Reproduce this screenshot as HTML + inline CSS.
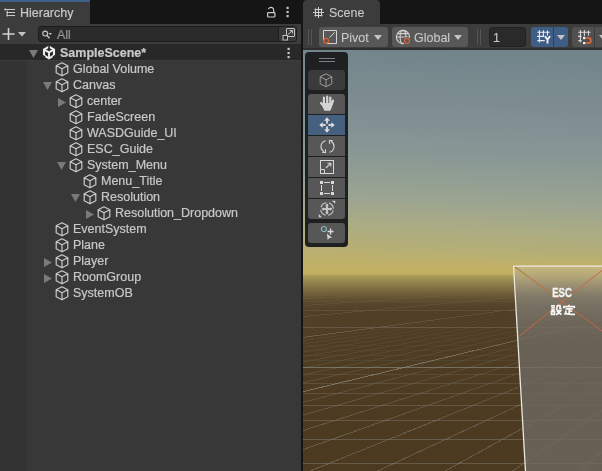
<!DOCTYPE html>
<html><head><meta charset="utf-8">
<style>
*{margin:0;padding:0;box-sizing:border-box}
html,body{width:602px;height:471px;overflow:hidden;background:#151515;font-family:"Liberation Sans",sans-serif;font-size:12.5px;color:#c8c8c8}
svg{display:block}
.a{position:absolute}
#hier{position:absolute;left:0;top:0;width:301px;height:471px;background:#383838;overflow:hidden}
#htabbar{position:absolute;left:0;top:0;width:301px;height:24px;background:#151515}
#htab{position:absolute;left:0;top:0;width:90px;height:24px;background:#3c3c3c;border-top:2px solid #3d6089}
#htoolbar{position:absolute;left:0;top:24px;width:301px;height:20px;background:#3c3c3c}
#search{position:absolute;left:38px;top:26px;width:259px;height:16px;background:#2a2a2a;border:1px solid #1c1c1c;border-radius:3px;overflow:hidden}
#sbtn{position:absolute;right:0;top:0;width:18px;height:14px;background:#393939;border-left:1px solid #1c1c1c}
#scenerow{position:absolute;left:0;top:44px;width:301px;height:16px;background:#282828}
#leftstrip{position:absolute;left:0;top:60px;width:27px;height:411px;background:#333333}
.row{position:absolute;left:0;width:301px;height:16px}
.ic{position:absolute;top:2px}
.arr{position:absolute}
.txt{position:absolute;top:0;line-height:16px;white-space:nowrap;padding-top:1px}
#scene{position:absolute;left:303px;top:0;width:299px;height:471px;overflow:hidden}
#stab{position:absolute;left:0;top:0;width:77px;height:24px;background:#3c3c3c;border-radius:4px 4px 0 0}
#stoolbar{position:absolute;left:0;top:24px;width:299px;height:24px;background:#3c3c3c}
#stbline{position:absolute;left:0;top:48px;width:299px;height:2px;background:#2e2e2e}
#sview{position:absolute;left:0;top:50px;width:299px;height:421px;background:linear-gradient(#72858b 0%,#889892 35%,#b1ab76 52%,#b9a658 54%,#4a3a20 57%,#4e3d22 100%)}
.btn{position:absolute;top:27px;height:20px;background:#585858;border-radius:3px}
#hier,#scene{will-change:transform}
#hier .txt,#hier .a{-webkit-text-stroke:0.2px #c8c8c8}
#scene div.a{-webkit-text-stroke:0.1px #c8c8c8}
</style></head><body>
<div id="hier">
  <div id="htabbar"></div>
  <div id="htab"></div>
  <svg class="a" style="left:3px;top:8px" width="13" height="10" viewBox="0 0 13 10"><path d="M3 1.5H12 M5.3 4.5H12 M5.3 7.5H12" stroke="#cccccc" stroke-width="1"/><path d="M4.3 2.5V7.5" stroke="#bdbdbd" stroke-width="0.8"/><circle cx="2.2" cy="1.5" r="1" fill="#cccccc"/><circle cx="4.3" cy="4.5" r="1" fill="#cccccc"/><circle cx="4.3" cy="7.5" r="1" fill="#cccccc"/></svg>
  <div class="a" style="left:20px;top:5px;line-height:16px;white-space:nowrap">Hierarchy</div>
  <svg class="a" style="left:266px;top:6px" width="11" height="12" viewBox="0 0 11 12"><path d="M2.3 2.8C3.5 1.4 5 1.2 6.2 1.6C7.3 2 7.7 3 7.7 4.2V6.5" fill="none" stroke="#cccccc" stroke-width="1.2"/><rect x="1.6" y="6.6" width="7.3" height="4.4" rx="0.8" fill="none" stroke="#cccccc" stroke-width="1.2"/></svg>
  <svg class="a" style="left:286px;top:6px" width="4" height="12"><rect x="0.5" y="0.8" width="2.2" height="2.2" fill="#c4c4c4"/><rect x="0.5" y="4.9" width="2.2" height="2.2" fill="#c4c4c4"/><rect x="0.5" y="9" width="2.2" height="2.2" fill="#c4c4c4"/></svg>
  <div id="htoolbar"></div>
  <svg class="a" style="left:2px;top:28px" width="13" height="13"><path d="M6.5 0V12 M0.5 6H12.5" stroke="#d2d2d2" stroke-width="1.6"/></svg>
  <svg class="a" style="left:18px;top:32px" width="9" height="5"><path d="M0 0H8L4 4.5Z" fill="#c4c4c4"/></svg>
  <div id="search"><div id="sbtn"></div></div>
  <svg class="a" style="left:42px;top:29px" width="12" height="11" viewBox="0 0 12 11"><circle cx="3.2" cy="4.6" r="2.4" fill="none" stroke="#c4c4c4" stroke-width="1.2"/><path d="M4.9 6.4L7.6 9.3" stroke="#c4c4c4" stroke-width="1.4"/><path d="M6.5 4H10L8.25 6Z" fill="#c4c4c4"/></svg>
  <div class="a" style="left:57px;top:27px;line-height:16px;color:#7a7a7a">All</div>
  <svg class="a" style="left:282px;top:28px" width="14" height="13" viewBox="0 0 14 13"><rect x="4.5" y="0.5" width="8" height="8" rx="0.5" fill="none" stroke="#c4c4c4" stroke-width="1"/><rect x="1" y="7.5" width="4.5" height="4.5" fill="#2a2a2a" stroke="#c4c4c4" stroke-width="1"/><path d="M6 6.5L10.5 2.5 M7.5 2.5H10.5V5.5" fill="none" stroke="#c4c4c4" stroke-width="1"/></svg>
  <div id="scenerow"></div>
  <svg class="a" style="left:29px;top:50px" width="10" height="9"><path d="M0 0H9L4.5 8Z" fill="#7a7a7a"/></svg>
  <svg class="a" style="left:42px;top:45px" width="14" height="15" viewBox="0 0 14 15"><path d="M7 1.6L12 4.5V10.5L7 13.4L2 10.5V4.5Z" fill="none" stroke="#ececec" stroke-width="2.1" stroke-linejoin="miter"/><path d="M7 7.4V13.4 M7 7.4L2.6 4.9 M7 7.4L11.4 4.9" stroke="#ececec" stroke-width="1.9"/><path d="M7 0V4.4" stroke="#282828" stroke-width="1.6"/><path d="M0 10L3.2 12 M14 10L10.8 12" stroke="#282828" stroke-width="1.4"/></svg>
  <div class="a" style="left:60px;top:44px;line-height:16px;font-weight:bold;white-space:nowrap;padding-top:1px">SampleScene*</div>
  <svg class="a" style="left:287px;top:47px" width="4" height="12"><rect x="0.5" y="0.8" width="2.2" height="2.2" fill="#c4c4c4"/><rect x="0.5" y="4.9" width="2.2" height="2.2" fill="#c4c4c4"/><rect x="0.5" y="9" width="2.2" height="2.2" fill="#c4c4c4"/></svg>
  <div id="leftstrip"></div>
  <div class="a" style="left:0;top:60px;width:301px;height:1px;background:#3d3d3d"></div>
<div class="row" style="top:60px"><div class="ic" style="left:55px"><svg class="cube" width="14" height="15" viewBox="0 0 14 15"><path d="M7 0.8L12.8 3.8V10.8L7 13.8L1.2 10.8V3.8Z M1.2 3.8L7 6.8L12.8 3.8 M7 6.8V13.8" fill="none" stroke="#cccccc" stroke-width="1.2" stroke-linejoin="round"/></svg></div><div class="txt" style="left:73px">Global Volume</div></div>
<div class="row" style="top:76px"><svg class="arr" style="left:43px;top:6px" width="10" height="9"><path d="M0 0H9L4.5 8Z" fill="#7a7a7a"/></svg><div class="ic" style="left:55px"><svg class="cube" width="14" height="15" viewBox="0 0 14 15"><path d="M7 0.8L12.8 3.8V10.8L7 13.8L1.2 10.8V3.8Z M1.2 3.8L7 6.8L12.8 3.8 M7 6.8V13.8" fill="none" stroke="#cccccc" stroke-width="1.2" stroke-linejoin="round"/></svg></div><div class="txt" style="left:73px">Canvas</div></div>
<div class="row" style="top:92px"><svg class="arr" style="left:58px;top:6px" width="9" height="10"><path d="M0 0L8 4.5L0 9Z" fill="#7a7a7a"/></svg><div class="ic" style="left:69px"><svg class="cube" width="14" height="15" viewBox="0 0 14 15"><path d="M7 0.8L12.8 3.8V10.8L7 13.8L1.2 10.8V3.8Z M1.2 3.8L7 6.8L12.8 3.8 M7 6.8V13.8" fill="none" stroke="#cccccc" stroke-width="1.2" stroke-linejoin="round"/></svg></div><div class="txt" style="left:87px">center</div></div>
<div class="row" style="top:108px"><div class="ic" style="left:69px"><svg class="cube" width="14" height="15" viewBox="0 0 14 15"><path d="M7 0.8L12.8 3.8V10.8L7 13.8L1.2 10.8V3.8Z M1.2 3.8L7 6.8L12.8 3.8 M7 6.8V13.8" fill="none" stroke="#cccccc" stroke-width="1.2" stroke-linejoin="round"/></svg></div><div class="txt" style="left:87px">FadeScreen</div></div>
<div class="row" style="top:124px"><div class="ic" style="left:69px"><svg class="cube" width="14" height="15" viewBox="0 0 14 15"><path d="M7 0.8L12.8 3.8V10.8L7 13.8L1.2 10.8V3.8Z M1.2 3.8L7 6.8L12.8 3.8 M7 6.8V13.8" fill="none" stroke="#cccccc" stroke-width="1.2" stroke-linejoin="round"/></svg></div><div class="txt" style="left:87px">WASDGuide_UI</div></div>
<div class="row" style="top:140px"><div class="ic" style="left:69px"><svg class="cube" width="14" height="15" viewBox="0 0 14 15"><path d="M7 0.8L12.8 3.8V10.8L7 13.8L1.2 10.8V3.8Z M1.2 3.8L7 6.8L12.8 3.8 M7 6.8V13.8" fill="none" stroke="#cccccc" stroke-width="1.2" stroke-linejoin="round"/></svg></div><div class="txt" style="left:87px">ESC_Guide</div></div>
<div class="row" style="top:156px"><svg class="arr" style="left:57px;top:6px" width="10" height="9"><path d="M0 0H9L4.5 8Z" fill="#7a7a7a"/></svg><div class="ic" style="left:69px"><svg class="cube" width="14" height="15" viewBox="0 0 14 15"><path d="M7 0.8L12.8 3.8V10.8L7 13.8L1.2 10.8V3.8Z M1.2 3.8L7 6.8L12.8 3.8 M7 6.8V13.8" fill="none" stroke="#cccccc" stroke-width="1.2" stroke-linejoin="round"/></svg></div><div class="txt" style="left:87px">System_Menu</div></div>
<div class="row" style="top:172px"><div class="ic" style="left:83px"><svg class="cube" width="14" height="15" viewBox="0 0 14 15"><path d="M7 0.8L12.8 3.8V10.8L7 13.8L1.2 10.8V3.8Z M1.2 3.8L7 6.8L12.8 3.8 M7 6.8V13.8" fill="none" stroke="#cccccc" stroke-width="1.2" stroke-linejoin="round"/></svg></div><div class="txt" style="left:101px">Menu_Title</div></div>
<div class="row" style="top:188px"><svg class="arr" style="left:71px;top:6px" width="10" height="9"><path d="M0 0H9L4.5 8Z" fill="#7a7a7a"/></svg><div class="ic" style="left:83px"><svg class="cube" width="14" height="15" viewBox="0 0 14 15"><path d="M7 0.8L12.8 3.8V10.8L7 13.8L1.2 10.8V3.8Z M1.2 3.8L7 6.8L12.8 3.8 M7 6.8V13.8" fill="none" stroke="#cccccc" stroke-width="1.2" stroke-linejoin="round"/></svg></div><div class="txt" style="left:101px">Resolution</div></div>
<div class="row" style="top:204px"><svg class="arr" style="left:86px;top:6px" width="9" height="10"><path d="M0 0L8 4.5L0 9Z" fill="#7a7a7a"/></svg><div class="ic" style="left:97px"><svg class="cube" width="14" height="15" viewBox="0 0 14 15"><path d="M7 0.8L12.8 3.8V10.8L7 13.8L1.2 10.8V3.8Z M1.2 3.8L7 6.8L12.8 3.8 M7 6.8V13.8" fill="none" stroke="#cccccc" stroke-width="1.2" stroke-linejoin="round"/></svg></div><div class="txt" style="left:115px">Resolution_Dropdown</div></div>
<div class="row" style="top:220px"><div class="ic" style="left:55px"><svg class="cube" width="14" height="15" viewBox="0 0 14 15"><path d="M7 0.8L12.8 3.8V10.8L7 13.8L1.2 10.8V3.8Z M1.2 3.8L7 6.8L12.8 3.8 M7 6.8V13.8" fill="none" stroke="#cccccc" stroke-width="1.2" stroke-linejoin="round"/></svg></div><div class="txt" style="left:73px">EventSystem</div></div>
<div class="row" style="top:236px"><div class="ic" style="left:55px"><svg class="cube" width="14" height="15" viewBox="0 0 14 15"><path d="M7 0.8L12.8 3.8V10.8L7 13.8L1.2 10.8V3.8Z M1.2 3.8L7 6.8L12.8 3.8 M7 6.8V13.8" fill="none" stroke="#cccccc" stroke-width="1.2" stroke-linejoin="round"/></svg></div><div class="txt" style="left:73px">Plane</div></div>
<div class="row" style="top:252px"><svg class="arr" style="left:44px;top:6px" width="9" height="10"><path d="M0 0L8 4.5L0 9Z" fill="#7a7a7a"/></svg><div class="ic" style="left:55px"><svg class="cube" width="14" height="15" viewBox="0 0 14 15"><path d="M7 0.8L12.8 3.8V10.8L7 13.8L1.2 10.8V3.8Z M1.2 3.8L7 6.8L12.8 3.8 M7 6.8V13.8" fill="none" stroke="#cccccc" stroke-width="1.2" stroke-linejoin="round"/></svg></div><div class="txt" style="left:73px">Player</div></div>
<div class="row" style="top:268px"><svg class="arr" style="left:44px;top:6px" width="9" height="10"><path d="M0 0L8 4.5L0 9Z" fill="#7a7a7a"/></svg><div class="ic" style="left:55px"><svg class="cube" width="14" height="15" viewBox="0 0 14 15"><path d="M7 0.8L12.8 3.8V10.8L7 13.8L1.2 10.8V3.8Z M1.2 3.8L7 6.8L12.8 3.8 M7 6.8V13.8" fill="none" stroke="#cccccc" stroke-width="1.2" stroke-linejoin="round"/></svg></div><div class="txt" style="left:73px">RoomGroup</div></div>
<div class="row" style="top:284px"><div class="ic" style="left:55px"><svg class="cube" width="14" height="15" viewBox="0 0 14 15"><path d="M7 0.8L12.8 3.8V10.8L7 13.8L1.2 10.8V3.8Z M1.2 3.8L7 6.8L12.8 3.8 M7 6.8V13.8" fill="none" stroke="#cccccc" stroke-width="1.2" stroke-linejoin="round"/></svg></div><div class="txt" style="left:73px">SystemOB</div></div>
</div>
<div id="scene">
  <div id="stab"></div>
  <svg class="a" style="left:10px;top:7px" width="11" height="11" viewBox="0 0 11 11"><path d="M2.5 1.5V9.5 M5.5 0V11 M8.5 1.5V9.5 M1.5 2.5H9.5 M0 5.5H11 M1.5 8.5H9.5" stroke="#d0d0d0" stroke-width="1"/></svg>
  <div class="a" style="left:26px;top:5px;line-height:16px;white-space:nowrap">Scene</div>
  <div id="stoolbar"></div>
  <div id="stbline"></div>
  <div class="a" style="left:5px;top:29px;width:1px;height:16px;background:#575757"></div>
  <div class="a" style="left:8px;top:29px;width:1px;height:16px;background:#575757"></div>
  <div class="btn" style="left:16px;width:69px"></div>
  <svg class="a" style="left:20px;top:30px" width="15" height="15" viewBox="0 0 15 15"><path d="M0.5 11V0.5H13.5V13.5H3.5" fill="none" stroke="#d4d4d4" stroke-width="1"/><path d="M11.8 2.3L6.5 7.5" stroke="#d4d4d4" stroke-width="1"/><circle cx="3.2" cy="10.8" r="2.4" fill="none" stroke="#d8612c" stroke-width="1.3"/></svg>
  <div class="a" style="left:38px;top:30px;line-height:16px;white-space:nowrap">Pivot</div>
  <svg class="a" style="left:71px;top:35px" width="9" height="6"><path d="M0 0H8L4 5Z" fill="#c4c4c4"/></svg>
  <div class="btn" style="left:89px;width:76px"></div>
  <svg class="a" style="left:92px;top:29px" width="17" height="17" viewBox="0 0 17 17"><circle cx="8" cy="8" r="6.6" fill="none" stroke="#d4d4d4" stroke-width="1.1"/><ellipse cx="8" cy="8" rx="2.9" ry="6.6" fill="none" stroke="#d4d4d4" stroke-width="1.1"/><path d="M1.4 8H14.6 M2.6 4.6H13.4" stroke="#d4d4d4" stroke-width="1.1"/><circle cx="12" cy="11.8" r="3.9" fill="#585858"/><circle cx="12" cy="11.8" r="2.5" fill="none" stroke="#d2643a" stroke-width="1.3"/></svg>
  <div class="a" style="left:111px;top:30px;line-height:16px;white-space:nowrap">Global</div>
  <svg class="a" style="left:151px;top:35px" width="9" height="6"><path d="M0 0H8L4 5Z" fill="#c4c4c4"/></svg>
  <div class="a" style="left:174px;top:29px;width:1px;height:16px;background:#575757"></div>
  <div class="a" style="left:177px;top:29px;width:1px;height:16px;background:#575757"></div>
  <div class="a" style="left:186px;top:27px;width:37px;height:20px;background:#2a2a2a;border:1px solid #212121;border-radius:3px"></div>
  <div class="a" style="left:190px;top:30px;line-height:16px">1</div>
  <div class="a" style="left:228px;top:27px;width:22px;height:20px;background:#3f5e85;border-radius:3px 0 0 3px"></div>
  <div class="a" style="left:251px;top:27px;width:14px;height:20px;background:#3f5e85;border-radius:0 3px 3px 0"></div>
  <svg class="a" style="left:230px;top:27px" width="22" height="20" viewBox="0 0 22 20"><path d="M6.4 3.2V15.5 M10.4 3.2V9.4 M14.5 3.6V8.5 M4.3 5.3H16.6 M4 9.4H11 M4.3 13.6H11.7" stroke="#ececec" stroke-width="1.1"/><path d="M11.9 9.1L14.5 12.6L17.1 9.1 M14.5 12.6V16.6" fill="none" stroke="#f2f2f2" stroke-width="1.8"/></svg>
  <svg class="a" style="left:254px;top:35px" width="9" height="6"><path d="M0 0H8L4 5Z" fill="#c4c4c4"/></svg>
  <div class="a" style="left:269px;top:27px;width:22px;height:20px;background:#505050;border-radius:3px 0 0 3px"></div>
  <div class="a" style="left:292px;top:27px;width:14px;height:20px;background:#505050;border-radius:0 3px 3px 0"></div>
  <svg class="a" style="left:271px;top:27px" width="22" height="20" viewBox="0 0 22 20"><path d="M6.4 3V15.5 M10.4 3V9.2 M14.5 3.6V8.5 M4.3 5.3H16.6 M4 9.4H7.7 M4.3 13.6H7.7" stroke="#d8d8d8" stroke-width="1.1"/><rect x="9" y="10" width="2.4" height="2.2" fill="#f4f4f4"/><rect x="9" y="15" width="2.4" height="2.1" fill="#f4f4f4"/><path d="M12.3 11H14.4A2.5 2.5 0 0 1 14.4 16H12.3" fill="none" stroke="#d2643a" stroke-width="2"/></svg>
  <svg class="a" style="left:296px;top:35px" width="9" height="6"><path d="M0 0H8L4 5Z" fill="#c4c4c4"/></svg>
  <svg class="a" style="left:0;top:50px" width="299" height="421" viewBox="0 0 299 421"><g transform="translate(-303,-50)" clip-path="url(#cl)"><defs><linearGradient id="sky" gradientUnits="userSpaceOnUse" x1="385" y1="50" x2="368.6" y2="471"><stop offset="0.0000" stop-color="#72858b"/><stop offset="0.0594" stop-color="#788a8e"/><stop offset="0.1188" stop-color="#7d8c90"/><stop offset="0.1781" stop-color="#829294"/><stop offset="0.2375" stop-color="#889795"/><stop offset="0.2969" stop-color="#919e93"/><stop offset="0.3563" stop-color="#9ca590"/><stop offset="0.4157" stop-color="#abac84"/><stop offset="0.4632" stop-color="#b4ae77"/><stop offset="0.4941" stop-color="#bcb06d"/><stop offset="0.5178" stop-color="#c2b165"/><stop offset="0.5321" stop-color="#c2b062"/><stop offset="0.5368" stop-color="#aa9a58"/><stop offset="0.5582" stop-color="#8b7b48"/><stop offset="0.5819" stop-color="#6c5a36"/><stop offset="0.5986" stop-color="#58472a"/><stop offset="0.6223" stop-color="#4f3e24"/><stop offset="1.0000" stop-color="#4b3a20"/></linearGradient><linearGradient id="hz" gradientUnits="userSpaceOnUse" x1="0" y1="255" x2="0" y2="471"><stop offset="-0.0463" stop-color="#b4ae77" stop-opacity="0.000"/><stop offset="0.0139" stop-color="#bcb06d" stop-opacity="0.273"/><stop offset="0.0602" stop-color="#c2b165" stop-opacity="1.000"/><stop offset="0.0880" stop-color="#c2b062" stop-opacity="1.000"/><stop offset="0.0972" stop-color="#aa9a58" stop-opacity="1.000"/><stop offset="0.1389" stop-color="#8b7b48" stop-opacity="1.000"/><stop offset="0.1852" stop-color="#6c5a36" stop-opacity="1.000"/><stop offset="0.2176" stop-color="#58472a" stop-opacity="1.000"/><stop offset="0.2639" stop-color="#4f3e24" stop-opacity="1.000"/><stop offset="1.0000" stop-color="#4b3a20" stop-opacity="1.000"/></linearGradient><linearGradient id="gmk" gradientUnits="userSpaceOnUse" x1="0" y1="50" x2="0" y2="471"><stop offset="0.5606" stop-color="#fff" stop-opacity="0"/><stop offset="0.6057" stop-color="#fff" stop-opacity="0.05"/><stop offset="0.6651" stop-color="#fff" stop-opacity="0.2"/><stop offset="0.7838" stop-color="#fff" stop-opacity="0.6"/><stop offset="0.9026" stop-color="#fff" stop-opacity="1.0"/><stop offset="1.0000" stop-color="#fff" stop-opacity="1.0"/></linearGradient><mask id="mk" maskUnits="userSpaceOnUse" x="303" y="50" width="299" height="421"><rect x="303" y="50" width="299" height="421" fill="url(#gmk)"/></mask><linearGradient id="gmj" gradientUnits="userSpaceOnUse" x1="0" y1="50" x2="0" y2="471"><stop offset="0.5653" stop-color="#fff" stop-opacity="0"/><stop offset="0.6057" stop-color="#fff" stop-opacity="0.22"/><stop offset="0.6532" stop-color="#fff" stop-opacity="0.45"/><stop offset="0.7363" stop-color="#fff" stop-opacity="0.85"/><stop offset="0.8314" stop-color="#fff" stop-opacity="1.0"/><stop offset="1.0000" stop-color="#fff" stop-opacity="1.0"/></linearGradient><mask id="mj" maskUnits="userSpaceOnUse" x="303" y="50" width="299" height="421"><rect x="303" y="50" width="299" height="421" fill="url(#gmj)"/></mask><clipPath id="cl"><rect x="303" y="50" width="299" height="421"/></clipPath></defs><rect x="303" y="50" width="299" height="421" fill="url(#sky)"/><rect x="303" y="255" width="299" height="216" fill="url(#hz)"/><g id="mng" mask="url(#mk)" stroke="#8a8a88" stroke-opacity="0.42" stroke-width="1" shape-rendering="crispEdges"><line x1="303" y1="463.5" x2="602" y2="463.5" stroke-opacity="0.420"/><line x1="303" y1="439.5" x2="602" y2="439.5" stroke-opacity="0.420"/><line x1="303" y1="420.5" x2="602" y2="420.5" stroke-opacity="0.420"/><line x1="303" y1="405.5" x2="602" y2="405.5" stroke-opacity="0.420"/><line x1="303" y1="393.5" x2="602" y2="393.5" stroke-opacity="0.420"/><line x1="303" y1="383.5" x2="602" y2="383.5" stroke-opacity="0.401"/><line x1="303" y1="374.5" x2="602" y2="374.5" stroke-opacity="0.350"/><line x1="303" y1="360.5" x2="602" y2="360.5" stroke-opacity="0.272"/><line x1="303" y1="355.5" x2="602" y2="355.5" stroke-opacity="0.241"/><line x1="303" y1="350.5" x2="602" y2="350.5" stroke-opacity="0.215"/><line x1="303" y1="345.5" x2="602" y2="345.5" stroke-opacity="0.192"/><line x1="303" y1="341.5" x2="602" y2="341.5" stroke-opacity="0.173"/><line x1="303" y1="338.5" x2="602" y2="338.5" stroke-opacity="0.155"/><line x1="303" y1="335.5" x2="602" y2="335.5" stroke-opacity="0.140"/><line x1="303" y1="332.5" x2="602" y2="332.5" stroke-opacity="0.126"/><line x1="303" y1="329.5" x2="602" y2="329.5" stroke-opacity="0.114"/><line x1="303" y1="324.5" x2="602" y2="324.5" stroke-opacity="0.093"/><line x1="303" y1="322.5" x2="602" y2="322.5" stroke-opacity="0.084"/><line x1="303" y1="320.5" x2="602" y2="320.5" stroke-opacity="0.076"/><line x1="303" y1="318.5" x2="602" y2="318.5" stroke-opacity="0.069"/><line x1="303" y1="317.5" x2="602" y2="317.5" stroke-opacity="0.063"/><line x1="303" y1="315.5" x2="602" y2="315.5" stroke-opacity="0.057"/><line x1="303" y1="314.5" x2="602" y2="314.5" stroke-opacity="0.051"/><line x1="303" y1="312.5" x2="602" y2="312.5" stroke-opacity="0.046"/><line x1="303" y1="311.5" x2="602" y2="311.5" stroke-opacity="0.041"/><line x1="303" y1="309.5" x2="602" y2="309.5" stroke-opacity="0.033"/><line x1="303" y1="308.5" x2="602" y2="308.5" stroke-opacity="0.030"/><line x1="303" y1="307.5" x2="602" y2="307.5" stroke-opacity="0.026"/><line x1="303" y1="306.5" x2="602" y2="306.5" stroke-opacity="0.023"/><line x1="303" y1="305.5" x2="602" y2="305.5" stroke-opacity="0.021"/><line x1="303" y1="304.5" x2="602" y2="304.5" stroke-opacity="0.018"/><line x1="303" y1="303.5" x2="602" y2="303.5" stroke-opacity="0.016"/><line x1="303" y1="302.5" x2="602" y2="302.5" stroke-opacity="0.013"/><line x1="625.82" y1="276" x2="-5359.90" y2="471"/><line x1="627.84" y1="276" x2="-5292.40" y2="471"/><line x1="629.85" y1="276" x2="-5224.90" y2="471"/><line x1="631.87" y1="276" x2="-5157.40" y2="471"/><line x1="633.88" y1="276" x2="-5089.90" y2="471"/><line x1="635.90" y1="276" x2="-5022.40" y2="471"/><line x1="637.91" y1="276" x2="-4954.90" y2="471"/><line x1="639.93" y1="276" x2="-4887.40" y2="471"/><line x1="641.94" y1="276" x2="-4819.90" y2="471"/><line x1="645.97" y1="276" x2="-4684.90" y2="471"/><line x1="647.99" y1="276" x2="-4617.40" y2="471"/><line x1="650.00" y1="276" x2="-4549.90" y2="471"/><line x1="652.02" y1="276" x2="-4482.40" y2="471"/><line x1="654.03" y1="276" x2="-4414.90" y2="471"/><line x1="656.05" y1="276" x2="-4347.40" y2="471"/><line x1="658.06" y1="276" x2="-4279.90" y2="471"/><line x1="660.08" y1="276" x2="-4212.40" y2="471"/><line x1="662.09" y1="276" x2="-4144.90" y2="471"/><line x1="666.12" y1="276" x2="-4009.90" y2="471"/><line x1="668.14" y1="276" x2="-3942.40" y2="471"/><line x1="670.15" y1="276" x2="-3874.90" y2="471"/><line x1="672.17" y1="276" x2="-3807.40" y2="471"/><line x1="674.18" y1="276" x2="-3739.90" y2="471"/><line x1="676.20" y1="276" x2="-3672.40" y2="471"/><line x1="678.21" y1="276" x2="-3604.90" y2="471"/><line x1="680.23" y1="276" x2="-3537.40" y2="471"/><line x1="682.24" y1="276" x2="-3469.90" y2="471"/><line x1="686.27" y1="276" x2="-3334.90" y2="471"/><line x1="688.29" y1="276" x2="-3267.40" y2="471"/><line x1="690.30" y1="276" x2="-3199.90" y2="471"/><line x1="692.32" y1="276" x2="-3132.40" y2="471"/><line x1="694.33" y1="276" x2="-3064.90" y2="471"/><line x1="696.35" y1="276" x2="-2997.40" y2="471"/><line x1="698.36" y1="276" x2="-2929.90" y2="471"/><line x1="700.38" y1="276" x2="-2862.40" y2="471"/><line x1="702.39" y1="276" x2="-2794.90" y2="471"/><line x1="706.42" y1="276" x2="-2659.90" y2="471"/><line x1="708.44" y1="276" x2="-2592.40" y2="471"/><line x1="710.45" y1="276" x2="-2524.90" y2="471"/><line x1="712.47" y1="276" x2="-2457.40" y2="471"/><line x1="714.48" y1="276" x2="-2389.90" y2="471"/><line x1="716.50" y1="276" x2="-2322.40" y2="471"/><line x1="718.51" y1="276" x2="-2254.90" y2="471"/><line x1="720.53" y1="276" x2="-2187.40" y2="471"/><line x1="722.54" y1="276" x2="-2119.90" y2="471"/><line x1="726.57" y1="276" x2="-1984.90" y2="471"/><line x1="728.59" y1="276" x2="-1917.40" y2="471"/><line x1="730.60" y1="276" x2="-1849.90" y2="471"/><line x1="732.61" y1="276" x2="-1782.40" y2="471"/><line x1="734.63" y1="276" x2="-1714.90" y2="471"/><line x1="736.64" y1="276" x2="-1647.40" y2="471"/><line x1="738.66" y1="276" x2="-1579.90" y2="471"/><line x1="740.67" y1="276" x2="-1512.40" y2="471"/><line x1="742.69" y1="276" x2="-1444.90" y2="471"/><line x1="746.72" y1="276" x2="-1309.90" y2="471"/><line x1="748.73" y1="276" x2="-1242.40" y2="471"/><line x1="750.75" y1="276" x2="-1174.90" y2="471"/><line x1="752.76" y1="276" x2="-1107.40" y2="471"/><line x1="754.78" y1="276" x2="-1039.90" y2="471"/><line x1="756.79" y1="276" x2="-972.40" y2="471"/><line x1="758.81" y1="276" x2="-904.90" y2="471"/><line x1="760.82" y1="276" x2="-837.40" y2="471"/><line x1="762.84" y1="276" x2="-769.90" y2="471"/><line x1="766.87" y1="276" x2="-634.90" y2="471"/><line x1="768.88" y1="276" x2="-567.40" y2="471"/><line x1="770.90" y1="276" x2="-499.90" y2="471"/><line x1="772.91" y1="276" x2="-432.40" y2="471"/><line x1="774.93" y1="276" x2="-364.90" y2="471"/><line x1="776.94" y1="276" x2="-297.40" y2="471"/><line x1="778.96" y1="276" x2="-229.90" y2="471"/><line x1="780.97" y1="276" x2="-162.40" y2="471"/><line x1="782.99" y1="276" x2="-94.90" y2="471"/><line x1="787.02" y1="276" x2="40.10" y2="471"/><line x1="789.03" y1="276" x2="107.60" y2="471"/><line x1="791.05" y1="276" x2="175.10" y2="471"/><line x1="793.06" y1="276" x2="242.60" y2="471"/><line x1="795.08" y1="276" x2="310.10" y2="471"/><line x1="797.09" y1="276" x2="377.60" y2="471"/><line x1="799.11" y1="276" x2="445.10" y2="471"/><line x1="801.12" y1="276" x2="512.60" y2="471"/><line x1="803.14" y1="276" x2="580.10" y2="471"/><line x1="807.17" y1="276" x2="715.10" y2="471"/></g><g id="mjg" mask="url(#mj)" stroke-width="1" shape-rendering="crispEdges"><line x1="303" y1="367.5" x2="602" y2="367.5" stroke="#9c9c98" stroke-opacity="0.6"/><line x1="303" y1="327.5" x2="602" y2="327.5" stroke="#9c9c98" stroke-opacity="0.6"/><line x1="303" y1="310.5" x2="602" y2="310.5" stroke="#9c9c98" stroke-opacity="0.6"/><line x1="303" y1="301.5" x2="602" y2="301.5" stroke="#9c9c98" stroke-opacity="0.6"/><line x1="303" y1="295.5" x2="602" y2="295.5" stroke="#9c9c98" stroke-opacity="0.6"/><line x1="303" y1="291.5" x2="602" y2="291.5" stroke="#9c9c98" stroke-opacity="0.6"/><line x1="303" y1="288.5" x2="602" y2="288.5" stroke="#9c9c98" stroke-opacity="0.6"/><line x1="303" y1="286.5" x2="602" y2="286.5" stroke="#9c9c98" stroke-opacity="0.6"/><line x1="303" y1="284.5" x2="602" y2="284.5" stroke="#9c9c98" stroke-opacity="0.6"/><line x1="303" y1="283.5" x2="602" y2="283.5" stroke="#9c9c98" stroke-opacity="0.6"/><line x1="303" y1="282.5" x2="602" y2="282.5" stroke="#9c9c98" stroke-opacity="0.6"/><line x1="303" y1="281.5" x2="602" y2="281.5" stroke="#9c9c98" stroke-opacity="0.6"/><line x1="303" y1="280.5" x2="602" y2="280.5" stroke="#9c9c98" stroke-opacity="0.6"/><line x1="303" y1="279.5" x2="602" y2="279.5" stroke="#9c9c98" stroke-opacity="0.6"/><line x1="303" y1="279.5" x2="602" y2="279.5" stroke="#9c9c98" stroke-opacity="0.6"/><line x1="303" y1="278.5" x2="602" y2="278.5" stroke="#9c9c98" stroke-opacity="0.6"/><line x1="623.81" y1="276" x2="-5427.40" y2="471" stroke="#9c9c98" stroke-opacity="0.6"/><line x1="643.96" y1="276" x2="-4752.40" y2="471" stroke="#9c9c98" stroke-opacity="0.6"/><line x1="664.11" y1="276" x2="-4077.40" y2="471" stroke="#9c9c98" stroke-opacity="0.6"/><line x1="684.26" y1="276" x2="-3402.40" y2="471" stroke="#9c9c98" stroke-opacity="0.6"/><line x1="704.41" y1="276" x2="-2727.40" y2="471" stroke="#9c9c98" stroke-opacity="0.6"/><line x1="724.56" y1="276" x2="-2052.40" y2="471" stroke="#9c9c98" stroke-opacity="0.6"/><line x1="744.70" y1="276" x2="-1377.40" y2="471" stroke="#9c9c98" stroke-opacity="0.6"/><line x1="764.85" y1="276" x2="-702.40" y2="471" stroke="#9c9c98" stroke-opacity="0.6"/><line x1="785.00" y1="276" x2="-27.40" y2="471" stroke="#9c9c98" stroke-opacity="0.6"/><line x1="805.15" y1="276" x2="647.60" y2="471" stroke="#9c9c98" stroke-opacity="0.6"/></g><defs><linearGradient id="qg" gradientUnits="userSpaceOnUse" x1="0" y1="265" x2="0" y2="471"><stop offset="0" stop-color="#c6b97f"/><stop offset="0.05" stop-color="#b5a878"/><stop offset="0.1" stop-color="#9a8f72"/><stop offset="0.15" stop-color="#837b68"/><stop offset="0.2" stop-color="#767062"/><stop offset="0.28" stop-color="#6d6659"/><stop offset="0.42" stop-color="#686054"/><stop offset="1" stop-color="#676054"/></linearGradient><clipPath id="qc"><path d="M513 265.5L602 265.5L602 471L525 471Z"/></clipPath></defs>
<path d="M513 265.5L602 265.5L602 471L525 471Z" fill="url(#qg)"/>
<g clip-path="url(#qc)" opacity="0.38"><use href="#mng"/><use href="#mjg"/></g>
<path d="M513 265.5L602 331 M519.4 336L602 270.3" stroke="#cc6440" stroke-width="1" stroke-opacity="0.95"/>
<path d="M513 265.5L530 278" stroke="#a09050" stroke-width="1.3" stroke-opacity="0.7"/>
<path d="M513 266H602 M513.5 265.5L525.5 471" stroke="#ece8e0" stroke-width="1.25"/>
<text x="552.2" y="296.7" font-family="Liberation Sans" font-weight="bold" font-size="12.2" fill="#f4f4f4" stroke="#f4f4f4" stroke-width="0.35" textLength="19.6" lengthAdjust="spacingAndGlyphs">ESC</text>
<g stroke="#f4f4f4" stroke-width="1.75" fill="none" transform="translate(0,-0.8)">
<path d="M551 306.6H555 M551.3 308.6H554.8 M551.3 310.6H554.8 M551.5 312.3H554.5V315.2H551.5Z"/>
<path d="M557 306.3V308.5C557 309.8 556.5 310.2 556 310.5 M557 306.3H560V309.2H561.5 M556.3 311.5H560.8C559.8 313.5 558 314.8 556 315.4 M557.2 312L561.5 315.4"/>
<path d="M569 305.6V307 M563.8 309V307.3H574.3V309 M565.5 309.7H572.8 M569.2 309.7V314.6 M569.2 312H572.3 M566 311.3C566 313 565.6 314.2 564.6 315.4 M566.2 314.3C567.5 315 570 315.2 575 315.2"/>
</g>
</g></svg>
  <div class="a" style="left:2px;top:52px;width:43px;height:195px;background:#1e2021;border-radius:4px"></div>
  <div class="a" style="left:16px;top:58px;width:16px;height:1px;background:#7e7e7e"></div>
  <div class="a" style="left:16px;top:61px;width:16px;height:1px;background:#7e7e7e"></div>
  <div class="a" style="left:5px;top:70px;width:37px;height:20px;background:#3b3b3b;border-radius:3px"></div>
  <svg class="a" style="left:16px;top:73px" width="14" height="15" viewBox="0 0 14 15"><path d="M7 0.8L12.8 3.8V10.8L7 13.8L1.2 10.8V3.8Z M1.2 3.8L7 6.8L12.8 3.8 M7 6.8V13.8" fill="none" stroke="#9a9a9a" stroke-width="1" stroke-linejoin="round"/></svg>
  <div class="a" style="left:5px;top:94px;width:37px;height:20px;background:#575757;border-radius:3px 3px 0 0"></div>
  <div class="a" style="left:5px;top:115px;width:37px;height:20px;background:#46607f"></div>
  <div class="a" style="left:5px;top:136px;width:37px;height:20px;background:#575757"></div>
  <div class="a" style="left:5px;top:157px;width:37px;height:20px;background:#575757"></div>
  <div class="a" style="left:5px;top:178px;width:37px;height:20px;background:#575757"></div>
  <div class="a" style="left:5px;top:199px;width:37px;height:20px;background:#575757;border-radius:0 0 3px 3px"></div>
  <div class="a" style="left:5px;top:223px;width:37px;height:20px;background:#575757;border-radius:3px"></div>
  <svg class="a" style="left:13px;top:93px" width="22" height="22" viewBox="0 0 22 22"><g stroke="#d4d4d4" stroke-width="2.2" stroke-linecap="round"><path d="M5 10L8 13.5 M7.9 11V4.6 M11.2 10V3.7 M14.3 10.5V4.6 M15.6 12L17 7.6"/></g><path d="M6.8 10H16.4L15.8 14.2L14.3 17.8H8.4L6.6 14Z" fill="#d4d4d4"/></svg>
  <svg class="a" style="left:15px;top:116px" width="18" height="18" viewBox="0 0 18 18"><path d="M9 4.5V7.6 M9 10.4V13.5 M4.5 9H7.6 M10.4 9H13.5" stroke="#d4d4d4" stroke-width="2"/><path d="M9 1.3L6.2 4.7H11.8Z M9 16.7L6.2 13.3H11.8Z M1.3 9L4.7 6.2V11.8Z M16.7 9L13.3 6.2V11.8Z" fill="#e4e4e4"/></svg>
  <svg class="a" style="left:17px;top:139px" width="15" height="15" viewBox="0 0 15 15"><path d="M5.5 1.8A6 6 0 0 0 4 12.8 M9.5 13.2A6 6 0 0 0 11 2.2" fill="none" stroke="#d8d8d8" stroke-width="1.1"/><path d="M2.3 13.5H5.5V10.3 M12.7 1.5H9.5V4.7" fill="none" stroke="#d8d8d8" stroke-width="1.1"/></svg>
  <svg class="a" style="left:17px;top:160px" width="15" height="15" viewBox="0 0 15 15"><rect x="0.5" y="0.5" width="13" height="13" fill="none" stroke="#d8d8d8" stroke-width="1"/><path d="M0.5 9.5H4.5V13.5" fill="none" stroke="#d8d8d8" stroke-width="1"/><path d="M6 8L10.8 3.2 M7.5 3.2H10.8V6.5" fill="none" stroke="#d8d8d8" stroke-width="1.1"/></svg>
  <svg class="a" style="left:17px;top:181px" width="15" height="15" viewBox="0 0 15 15"><rect x="0" y="0" width="3" height="3" fill="#d8d8d8"/><rect x="11" y="0" width="3" height="3" fill="#d8d8d8"/><rect x="0" y="11" width="3" height="3" fill="#d8d8d8"/><rect x="11" y="11" width="3" height="3" fill="#d8d8d8"/><path d="M4 1.5H10 M4 12.5H10 M1.5 4V10 M12.5 4V10" stroke="#d8d8d8" stroke-width="1"/></svg>
  <svg class="a" style="left:15px;top:200px" width="18" height="18" viewBox="0 0 18 18"><circle cx="9" cy="9" r="6.3" fill="none" stroke="#cfcfcf" stroke-width="1.1" stroke-dasharray="7.3 2.6" stroke-dashoffset="-1.3"/><path d="M9 5V13 M5 9H13" stroke="#c4c4c4" stroke-width="2.2"/><path d="M9 3.6L7.2 5.6H10.8Z M9 14.4L7.2 12.4H10.8Z M3.6 9L5.6 7.2V10.8Z M14.4 9L12.4 7.2V10.8Z" fill="#d0d0d0"/><path d="M13.9 0.8H17.2V3.8Z M0.8 13.9V17.2H3.8Z" fill="#d8d8d8"/></svg>
  <svg class="a" style="left:16px;top:224px" width="16" height="18" viewBox="0 0 16 18"><circle cx="4.9" cy="5" r="2.5" fill="none" stroke="#8cb4c2" stroke-width="1.2"/><path d="M11.6 4.5V10.5 M8.6 7.5H14.6" stroke="#dadada" stroke-width="1.4"/><path d="M7.9 9.6L8.7 15.9L10.3 13.9L13.1 13.8Z" fill="#d4d4d4"/></svg>
  <div class="a" style="left:210px;top:215px;width:89px;height:1px"></div>

</div>
</body></html>
